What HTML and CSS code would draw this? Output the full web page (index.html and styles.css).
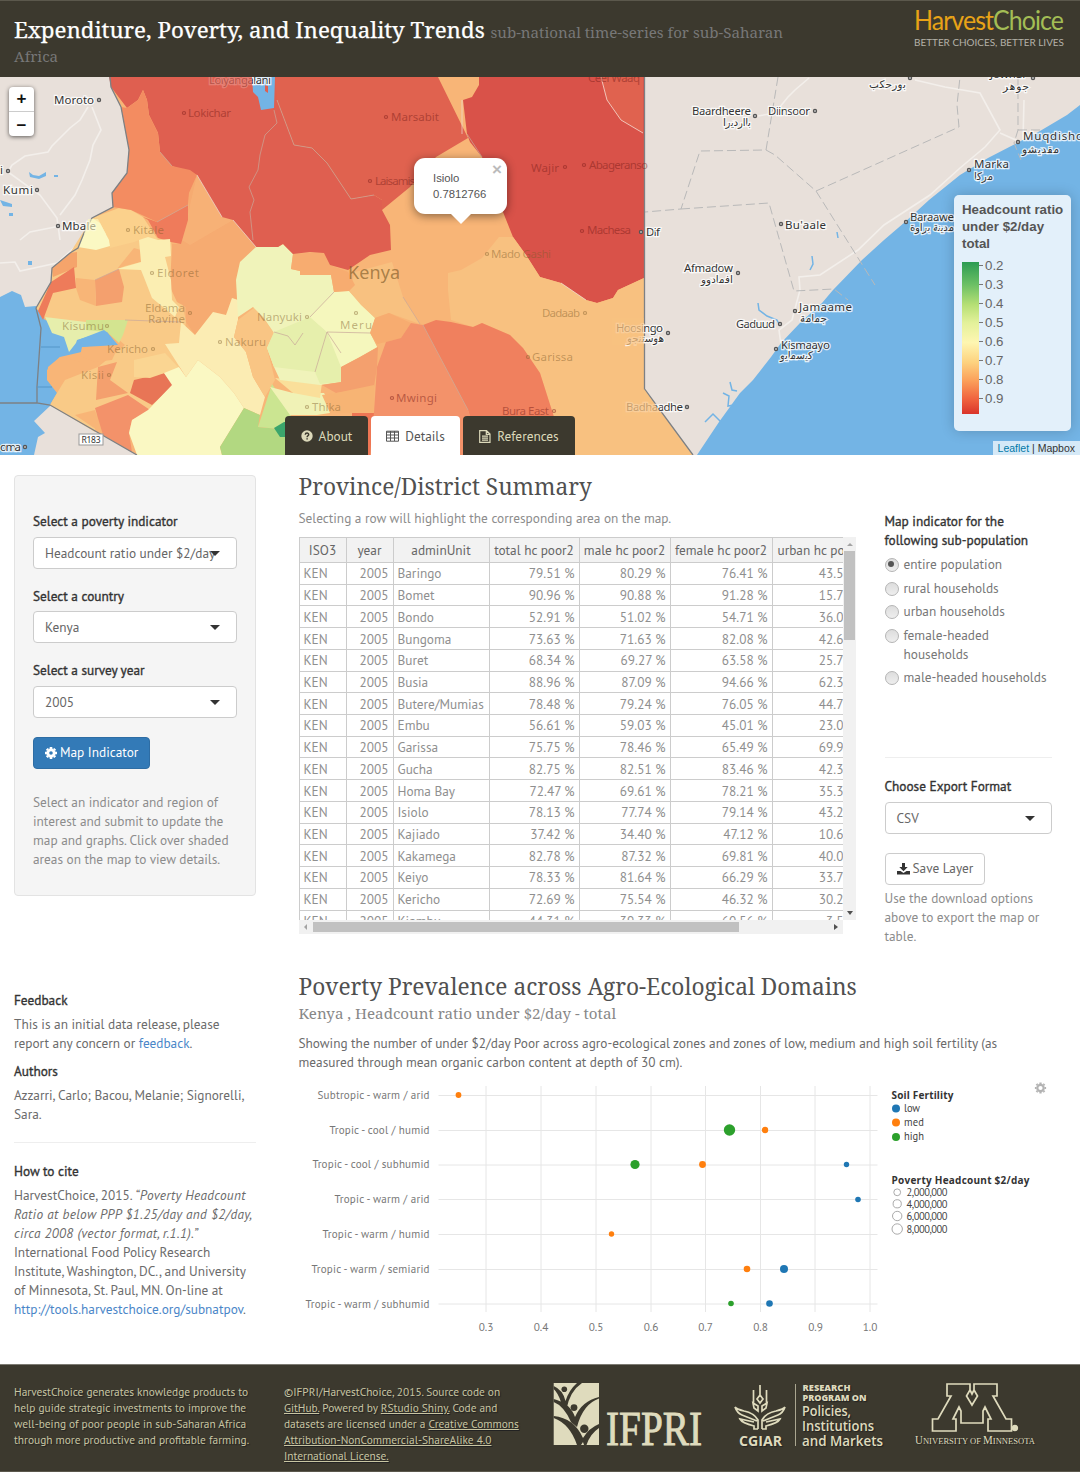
FILE: index.html
```html
<!DOCTYPE html>
<html lang="en">
<head>
<meta charset="utf-8">
<title>Expenditure, Poverty, and Inequality Trends</title>
<link rel="stylesheet" href="styles.css">
</head>
<body>
<header class="top">
  <h1 class="title">Expenditure, Poverty, and Inequality Trends <small>sub-national time-series for sub-Saharan<br>Africa</small></h1>
  <svg class="brand" width="152" height="42" viewBox="0 0 152 42">
    <text x="0" y="23" class="brand-name" textLength="149" lengthAdjust="spacingAndGlyphs"><tspan fill="#e8a317">Harvest</tspan><tspan fill="#a3bd55">Choice</tspan></text>
    <text x="0" y="39" class="brand-tag" textLength="150" lengthAdjust="spacingAndGlyphs">BETTER CHOICES, BETTER LIVES</text>
  </svg>
</header>

<section class="map">
  <svg class="map-canvas" width="1080" height="378" viewBox="0 77 1080 378">
    <rect x="0" y="77" width="1080" height="378" fill="#e8e0da"/>
    <g fill="none" stroke="#f3efeb" stroke-width="1.6">
      <path d="M88 107L80 120 70 128 52 146 48 152 25 156 12 165 8 172 40 195 57 218 60 240 M92 107L101 130 93 145 90 160 82 180 75 195 60 215 M60 226L30 232 20 240 M0 263L15 262 20 271 57 263 75 247"/>
      <path d="M809 78L795 90 788 97 775 113 758 116 M915 80L945 87 980 93 1000 130 985 147 960 168 930 195 884 225 858 250 820 275 799 277 800 290 792 320 779 330 781 345 M1000 133L1018 141 M1024 100L1023 140"/>
    </g>
    <path class="sea" d="M1080 105L1067 115 1040 131 1019 142 988 158 960 175 929 200 905 222 884 240 862 260 833 290 822 303 800 323 781 343 771 357 753 380 740 393 719 422 697 455H1080Z"/>
    <path class="sea" d="M0 297L12 291 21 295 25 307 36 306 48 320 60 335 100 330 120 322 120 347 88 360 60 362 50 380 60 393 50 406 34 421 45 433 38 437 34 455H0Z"/>
    <path class="sea" d="M29 172l4 3 6 1 7-4v4l-7 3-9-2zM0 200l12 4v3l-9-1zM54 175h4v2h-4zM28 261h4v4h-4zM9 213h4v3h-4z"/>
    <path d="M758 303l1 7 8 6 10 4 3 6M730 382l2 8 5 1M723 393l6 3-1 10 6-1M705 422l8-8 8 8M810 270l3-6-1-8M837 232l1 6" fill="none" stroke="#73b4e5" stroke-width="1.5"/>
    <path d="M778 77L766 150 700 151 681 209 645 212 M681 209L769 203 794 291 834 289 848 300 M766 150L775 155 816 191 875 285 M816 191L959 127 957 105 960 77 M1018 77V130L1014 143 1021 160 M1018 130H1040" fill="none" stroke="#b9b9b9" stroke-dasharray="9 4"/>

    <path fill="#f8b577" d="M110 77L111 87 121 107 129 150 127 173 112 193 113 207 92 218 84 233 78 248 70 253 52 268 51 282 36 308 45 320 107 332 118 345 90 350 60 357 47 370 47 380 57 393 50 405 137 455H693L644 389V77Z"/>
    <path fill="#f9ca87" d="M92 218L171 242 186 322 184 337 179 368 172 385 148 410 132 420 97 410 95 432 50 405 57 393 65 380 98 367 125 345 107 330 45 317 36 308 51 282 52 268 70 253Z"/>
    <path fill="#f8b577" d="M76 278L95 280V292L96 306 80 300 76 288ZM117 269L134 248 141 250 141 262 125 266ZM82 347L119 345 112 360 95 362 80 356ZM60 357L80 362 70 372 57 385 47 380 48 367ZM75 415L95 410 103 434Z"/>
    <path fill="#f5a46b" d="M77 252V267L53 277 52 268 70 253Z"/>
    <path fill="#f4a06e" d="M95 280L119 269 124 287 122 302 96 306ZM98 367L117 362 110 380 128 393 96 400Z"/>
    <path fill="#ee7b5a" d="M51 282L74 267 76 288 53 293 43 320 38 311Z"/>
    <path fill="#f3926a" d="M95 408L128 395 150 410 132 420 129 433 132 452 103 435Z"/>
    <path fill="#e87556" d="M134 380L164 373 174 385 152 405 130 393Z"/>
    <path fill="#fad592" d="M134 360L165 353 179 368 150 378 134 377Z"/>
    <path fill="#f6ab71" d="M197 175L222 217 233 220 256 247 240 262 236 280 238 300 232 298 226 315 213 312 195 335 186 322 186 307 177 302 170 287 172 244 181 244 188 220 189 193Z"/>
    <path fill="#f8b378" d="M197 175L222 217 233 220 190 245 182 240Z" opacity=".8"/>
    <path fill="#fbd18c" d="M92 218L119 208 131 210 143 217 158 240 139 240 134 242 110 248 109 240 100 223Z"/>
    <path fill="#ef7b5b" d="M143 217L157 222 188 205V220L181 244 171 242 158 238 148 220Z"/>
    <path fill="#fbf8c3" d="M92 218L100 223 109 240 110 246 96 250 78 247 84 233Z"/>
    <path fill="#fbeeb2" d="M139 240L148 237 158 240 170 239 171 256 165 257 171 280 172 300 179 307 175 317 152 298 145 280 141 270 117 269 141 262Z"/>
    <path fill="#e6eeac" d="M45 317L86 322 103 332 77 340 76 343 69 352 64 337 52 333Z"/>
    <path fill="#d3e490" d="M86 320L128 320 123 335 119 343 107 332 86 330Z"/>
    <path class="sea" d="M78 340L104 330 108 333 112 343 82 347Z"/>
    <path fill="#fbecb3" d="M165 344L179 343 181 322 195 335 213 312 226 315 232 298 238 300V320L234 337 246 352 253 377 265 397 260 415 244 408 234 393 220 377 198 360 186 377Z"/>
    <path fill="#f9c584" d="M238 320L255 307 274 333 267 348 275 380 272 385 265 397 253 377 246 352 234 337Z"/>
    <path fill="#faf8c3" d="M164 373L179 367 186 377 198 360 220 377 234 393 244 408 220 447 222 455H137L129 433 132 420 148 410 172 385Z"/>
    <path fill="#b2d881" d="M244 408L260 415 258 427 290 430V455H222L220 447Z"/>
    <path fill="#cbe591" d="M272 384L291 412 290 430 258 427Z"/>
    <path fill="#3ba56c" d="M274 428L284 422H292V437H280Z"/>
    <path fill="#f0f2b6" d="M270 387L293 393 324 393 336 412 317 415H290Z"/>
    <path fill="#fadf9a" d="M275 378L322 383 320 398 293 393Z"/>
    <path fill="#f0f3ba" d="M256 247H278L283 244 293 254 291 269 300 271V275H331L334 292 349 291 361 305 375 318 370 333 377 347 360 357 341 367V382L320 385 280 380 274 367 267 348 274 333 263 317 253 307 238 317 236 280 240 262Z"/>
    <path fill="#e6efac" d="M274 332L310 317 327 332 341 353V382L320 384 315 372 274 367 267 348Z"/>
    <path fill="#f5f7bd" d="M310 317L334 292 349 291 375 318 370 333 377 347 341 367 327 332Z"/>
    <path fill="#f8c180" d="M355 272L392 262 403 297 420 324 389 313 375 318 361 305 349 291Z"/>
    <path fill="#f7ac70" d="M293 254L324 252 330 265 348 272 355 285 349 291 334 292 331 275H300V271L291 269ZM375 318L389 313 411 323 401 338 386 342 377 344 370 333Z"/>
    <path fill="#f4a06e" d="M360 357L378 347 377 367 374 387 336 393 322 385 341 382V367Z"/>
    <path fill="#f7b474" d="M336 393L374 385V412L330 413 322 395Z"/>
    <path fill="#ee7654" d="M352 413h28v42h-28z"/>
    <path fill="#df5f50" d="M109 77H277V100L294 145 312 148 327 163 351 199 374 195 382 200V210L390 225 391 250 370 255 348 270 330 265 324 253 310 252 293 254 283 244 278 247H256L233 220 222 217 197 175 172 166 160 152 158 133 149 115 147 100 143 90 138 100 127 108 111 87Z"/>
    <path fill="#e0624f" d="M275 77H438L468 138 436 157 410 187 382 210V200L374 195 351 199 327 163 312 148 294 145 277 100Z"/>
    <path fill="#f38c61" d="M121 107L127 108 138 100 143 90 147 100 149 115 158 133 160 152 172 166 190 170 197 175 189 193 188 205 157 222 131 210 119 208 113 207 112 193 127 173 129 150Z"/>
    <path fill="#d95249" d="M479 77H644V278L618 290 613 298 597 303 586 300 561 283 540 277 526 255 513 237 501 207 482 157 470 142 467 134 463 100 472 97 479 85Z"/>
    <path fill="#e0624f" d="M601 77L607 100 621 120 643 133V77Z"/>
    <path d="M601 77L607 100 621 120 643 133" fill="none" stroke="#f1c4b8"/>
    <path fill="#f8c180" d="M448 273L461 270 482 258 499 237 513 237 526 255 540 277 561 283 586 300 597 303 613 298 618 290 644 278V389L693 455H560L554 417 540 373 523 348 510 335 482 323 473 327 451 320 448 290Z"/>
    <path fill="#f0805e" d="M423 325L436 320 451 322 473 327 482 323 510 335 523 348 540 373 554 417 560 455H480L468 410Z"/>
    <path fill="#f3926a" d="M423 325L411 323 401 338 386 342 377 367 374 412 370 455H485L468 410Z"/>
    <path class="sea" d="M252 77H275L274 108 261 110 258 97 253 92Z"/>
    <path d="M265 85l3 1v7l-3-2z" fill="#df5f50"/>
    <g fill="none" stroke="#c9a79a" stroke-width=".7">
      <path d="M274 110L277 123 265 135 260 155 258 170 249 187 254 200 250 212 253 240M277 100L294 145 312 148 327 163 351 199 374 195M467 134L482 157M172 166L160 152M423 325L468 410M403 297L420 324M310 317L334 292M327 332L341 353M327 332L315 372M327 332L370 333M188 205L157 222M125 320L181 322M95 280L119 269M274 332L288 336 295 345 303 333"/>
      <path stroke="#eddcd5" d="M561 283L586 300M462 100V134M197 175L222 217M233 220L256 247"/>
    </g>
    <path d="M110 77L111 87 121 107 129 150 127 173 112 193 113 207 92 218 84 233 78 248 70 253 52 268 51 282 36 308 41 328 37 387V403L50 405 137 455M37 403H0M644.500 77V389L693 455" fill="none" stroke="#7d8084" stroke-width="1.3"/>
    <path d="M41 347H60M37 387H52" fill="none" stroke="#5596c8"/>
    <rect x="79" y="434" width="24" height="11" fill="#fff" stroke="#999"/>
    <text class="road" x="81.500" y="443" textLength="19">R183</text>

    <g class="place">
      <text x="54" y="104" textLength="40">Moroto</text><text x="3" y="194" textLength="30">Kumi</text><text x="0" y="174">i</text><text x="62" y="230" textLength="34">Mbale</text><text x="0" y="451" textLength="21">oma</text>
      <text x="692" y="115" textLength="59">Baardheere</text><text x="768" y="115" textLength="42">Diinsoor</text><text x="785" y="229" textLength="41">Bu'aale</text><text x="684" y="272" textLength="49">Afmadow</text><text x="799" y="311" textLength="53">Jamaame</text><text x="736" y="328" textLength="39">Gaduud</text><text x="781" y="349" textLength="49">Kismaayo</text><text x="974" y="168" textLength="35">Marka</text><text x="1023" y="140" textLength="60">Muqdisho</text><text x="910" y="221" textLength="44">Baraawe</text><text x="646" y="236" textLength="14">Dif</text><text x="616" y="332" textLength="47">Hoosingo</text><text x="626" y="411" textLength="57">Badhaadhe</text>
      <g class="arabic"><text x="723" y="126" textLength="28">بااردیرا</text><text x="869" y="88" textLength="37">بورحكب</text><text x="1003" y="90" textLength="26">جوهر</text><text x="1022" y="153" textLength="37">مقديشو</text><text x="974" y="180" textLength="19">مركا</text><text x="910" y="231" textLength="44">مدينة براوة</text><text x="701" y="283" textLength="32">افمادوو</text><text x="800" y="322" textLength="27">جمامة</text><text x="780" y="359" textLength="33">كيسمايو</text><text x="627" y="342" textLength="37">هوستنجو</text></g>
      <text x="209" y="84" textLength="62">Loiyangalani</text><text x="990" y="78" textLength="37">Jowhar</text>
    </g>
    <g class="dot"><circle cx="99" cy="100" r="1.600"/><circle cx="37" cy="190" r="1.600"/><circle cx="8" cy="171" r="1.600"/><circle cx="58" cy="226" r="1.600"/><circle cx="25" cy="447" r="1.600"/><circle cx="755" cy="116" r="1.600"/><circle cx="815" cy="111" r="1.600"/><circle cx="781" cy="224" r="1.600"/><circle cx="738" cy="273" r="1.600"/><circle cx="795" cy="311" r="1.600"/><circle cx="780" cy="324" r="1.600"/><circle cx="776" cy="349" r="1.600"/><circle cx="969" cy="170" r="1.600"/><circle cx="1018" cy="142" r="1.600"/><circle cx="906" cy="222" r="1.600"/><circle cx="668" cy="333" r="1.600"/><circle cx="687" cy="407" r="1.600"/><circle cx="910" cy="78" r="1.600"/><circle cx="1033" cy="78" r="1.600"/><circle cx="641" cy="232" r="1.600"/></g>
    <!-- district fill laid over the parts of border labels that fall inside Kenya -->
    <path fill="#f8c180" opacity=".75" d="M612 318H643.500V345H612ZM622 400H644V389L656 406 663 416H622Z"/>
    <path fill="#df5f50" opacity=".75" d="M205 77H252V90H205Z"/>
    <path fill="#fbf8c3" opacity=".6" d="M88 219H98L106 234H84Z"/>
    <g class="covered red">
      <text x="188" y="117" textLength="43">Lokichar</text><text x="391" y="121" textLength="48">Marsabit</text><text x="375" y="185" textLength="40">Laisamis</text><text x="531" y="172" textLength="28">Wajir</text><text x="589" y="169" textLength="59">Abageranso</text><text x="587" y="234" textLength="44">Machesa</text><text x="588" y="82" textLength="52">Ceel Waaq</text>
      <circle cx="184" cy="113" r="1.500"/><circle cx="386" cy="117" r="1.500"/><circle cx="370" cy="181" r="1.500"/><circle cx="565" cy="167" r="1.500"/><circle cx="584" cy="165" r="1.500"/><circle cx="582" cy="231" r="1.500"/>
      <text x="396" y="402" textLength="41">Mwingi</text><text x="502" y="415" textLength="47">Bura East</text><circle cx="392" cy="398" r="1.500"/><circle cx="554" cy="411" r="1.500"/>
    </g>
    <g class="covered tan">
      <text x="133" y="234" textLength="31">Kitale</text><text x="157" y="277" textLength="42">Eldoret</text><text x="145" y="312" textLength="40">Eldama</text><text x="148" y="323" textLength="37">Ravine</text><text x="107" y="353" textLength="41">Kericho</text><text x="81" y="379" textLength="23">Kisii</text><text x="225" y="346" textLength="41">Nakuru</text><text x="257" y="321" textLength="45">Nanyuki</text><text x="340" y="329" textLength="32">Meru</text><text x="312" y="411" textLength="29">Thika</text><text x="62" y="330" textLength="42">Kisumu</text><text x="491" y="258" textLength="60">Mado Gashi</text><text x="542" y="317" textLength="38">Dadaab</text><text x="532" y="361" textLength="41">Garissa</text>
      <text class="country" x="348" y="279" textLength="52">Kenya</text>
      <circle cx="128" cy="230" r="1.500"/><circle cx="152" cy="273" r="1.500"/><circle cx="190" cy="313" r="1.500"/><circle cx="153" cy="349" r="1.500"/><circle cx="109" cy="375" r="1.500"/><circle cx="220" cy="342" r="1.500"/><circle cx="307" cy="317" r="1.500"/><circle cx="356" cy="313" r="1.500"/><circle cx="307" cy="407" r="1.500"/><circle cx="487" cy="254" r="1.500"/><circle cx="585" cy="313" r="1.500"/><circle cx="528" cy="357" r="1.500"/><circle cx="107" cy="326" r="1.500"/>
    </g>
  </svg>
  <div class="zoomer"><span>+</span><span>−</span></div>
  <div class="popup">Isiolo<br>0.7812766<i>×</i></div>
  <aside class="legend">
    <b>Headcount ratio<br>under $2/day<br>total</b>
    <div class="scale"><div class="ramp"></div><ul><li>0.2</li><li>0.3</li><li>0.4</li><li>0.5</li><li>0.6</li><li>0.7</li><li>0.8</li><li>0.9</li></ul></div>
  </aside>
  <div class="credit"><a>Leaflet</a> | Mapbox</div>
  <nav class="tabs">
    <a class="tab"><svg width="12" height="12" viewBox="0 0 12 12"><circle cx="6" cy="6" r="5.700" fill="#dcd9ba"/><path d="M4.300 4.700C4.300 2.500 7.800 2.600 7.700 4.600 7.600 5.800 6.100 5.800 6.100 7.200M6.100 8.200V9.600" fill="none" stroke="#3c392e" stroke-width="1.500"/></svg>About</a>
    <a class="tab on"><svg width="13" height="12" viewBox="0 0 13 12"><path d="M.5 1.200H12.500V11.200H.5ZM.5 2.200H12.500M.5 5H12.500M.5 8H12.500M4.500 1V11M8.500 1V11" fill="none" stroke="#555"/></svg>Details</a>
    <a class="tab"><svg width="12" height="13" viewBox="0 0 12 13"><path d="M.7.700H7.500L11 4V12.300H.7ZM7.300.700V4.300H11M3 6.200H9M3 8.200H9M3 10.200H9" fill="none" stroke="#dcd9ba" stroke-width="1.200"/></svg>References</a>
  </nav>
</section>

<main class="page">
  <form class="well">
    <label>Select a poverty indicator</label>
    <div class="select">Headcount ratio under $2/day</div>
    <label>Select a country</label>
    <div class="select">Kenya</div>
    <label>Select a survey year</label>
    <div class="select">2005</div>
    <button type="button" class="primary"><svg width="12" height="12" viewBox="-6 -6 12 12"><circle r="3.200" fill="none" stroke="#fff" stroke-width="2.800"/><path d="M0-6V-4M0 6V4M-6 0H-4M6 0H4M-4.200-4.200L-3-3M4.200 4.200L3 3M4.200-4.200L3-3M-4.200 4.200L-3 3" stroke="#fff" stroke-width="2.600"/></svg>Map Indicator</button>
    <p>Select an indicator and region of<br>interest and submit to update the<br>map and graphs. Click over shaded<br>areas on the map to view details.</p>
  </form>

  <section class="summary">
    <h2>Province/District Summary</h2>
    <p class="hint">Selecting a row will highlight the corresponding area on the map.</p>
    <div class="grid">
      <div class="viewport">
        <table>
          <colgroup><col class="c1"><col class="c2"><col class="c3"><col class="c4"><col class="c5"><col class="c6"><col class="c7"></colgroup>
          <tr><th>ISO3</th><th>year</th><th>adminUnit</th><th>total hc poor2</th><th>male hc poor2</th><th>female hc poor2</th><th>urban hc poor2</th></tr>
          <tr><td>KEN</td><td>2005</td><td>Baringo</td><td>79.51 %</td><td>80.29 %</td><td>76.41 %</td><td>43.56 %</td></tr>
          <tr><td>KEN</td><td>2005</td><td>Bomet</td><td>90.96 %</td><td>90.88 %</td><td>91.28 %</td><td>15.74 %</td></tr>
          <tr><td>KEN</td><td>2005</td><td>Bondo</td><td>52.91 %</td><td>51.02 %</td><td>54.71 %</td><td>36.00 %</td></tr>
          <tr><td>KEN</td><td>2005</td><td>Bungoma</td><td>73.63 %</td><td>71.63 %</td><td>82.08 %</td><td>42.60 %</td></tr>
          <tr><td>KEN</td><td>2005</td><td>Buret</td><td>68.34 %</td><td>69.27 %</td><td>63.58 %</td><td>25.70 %</td></tr>
          <tr><td>KEN</td><td>2005</td><td>Busia</td><td>88.96 %</td><td>87.09 %</td><td>94.66 %</td><td>62.30 %</td></tr>
          <tr><td>KEN</td><td>2005</td><td>Butere/Mumias</td><td>78.48 %</td><td>79.24 %</td><td>76.05 %</td><td>44.70 %</td></tr>
          <tr><td>KEN</td><td>2005</td><td>Embu</td><td>56.61 %</td><td>59.03 %</td><td>45.01 %</td><td>23.00 %</td></tr>
          <tr><td>KEN</td><td>2005</td><td>Garissa</td><td>75.75 %</td><td>78.46 %</td><td>65.49 %</td><td>69.90 %</td></tr>
          <tr><td>KEN</td><td>2005</td><td>Gucha</td><td>82.75 %</td><td>82.51 %</td><td>83.46 %</td><td>42.30 %</td></tr>
          <tr><td>KEN</td><td>2005</td><td>Homa Bay</td><td>72.47 %</td><td>69.61 %</td><td>78.21 %</td><td>35.30 %</td></tr>
          <tr><td>KEN</td><td>2005</td><td>Isiolo</td><td>78.13 %</td><td>77.74 %</td><td>79.14 %</td><td>43.20 %</td></tr>
          <tr><td>KEN</td><td>2005</td><td>Kajiado</td><td>37.42 %</td><td>34.40 %</td><td>47.12 %</td><td>10.60 %</td></tr>
          <tr><td>KEN</td><td>2005</td><td>Kakamega</td><td>82.78 %</td><td>87.32 %</td><td>69.81 %</td><td>40.00 %</td></tr>
          <tr><td>KEN</td><td>2005</td><td>Keiyo</td><td>78.33 %</td><td>81.64 %</td><td>66.29 %</td><td>33.74 %</td></tr>
          <tr><td>KEN</td><td>2005</td><td>Kericho</td><td>72.69 %</td><td>75.54 %</td><td>46.32 %</td><td>30.20 %</td></tr>
          <tr><td>KEN</td><td>2005</td><td>Kiambu</td><td>44.31 %</td><td>39.33 %</td><td>60.56 %</td><td>3.50 %</td></tr>
        </table>
      </div>
      <div class="vbar"><i></i></div>
      <div class="hbar"><i></i></div>
    </div>
  </section>

  <section class="options">
    <label>Map indicator for the<br>following sub-population</label>
    <ul class="radios"><li class="on">entire population</li><li>rural households</li><li>urban households</li><li>female-headed<br>households</li><li>male-headed households</li></ul>
    <hr>
    <label>Choose Export Format</label>
    <div class="select">CSV</div>
    <button type="button" class="plain"><svg width="13" height="12" viewBox="0 0 13 12"><path d="M5 0H8V4H10.700L6.500 8.200 2.300 4H5ZM0 8H3.500L6.500 10 9.500 8H13V11.500H0Z" fill="#333"/></svg>Save Layer</button>
    <p>Use the download options<br>above to export the map or<br>table.</p>
  </section>

  <section class="notes">
    <h4>Feedback</h4>
    <p>This is an initial data release, please<br>report any concern or <a>feedback</a>.</p>
    <h4>Authors</h4>
    <p>Azzarri, Carlo; Bacou, Melanie; Signorelli,<br>Sara.</p>
    <hr>
    <h4>How to cite</h4>
    <p>HarvestChoice, 2015. <em>“Poverty Headcount<br>Ratio at below PPP $1.25/day and $2/day,<br>circa 2008 (vector format, r.1.1).”</em><br>International Food Policy Research<br>Institute, Washington, DC., and University<br>of Minnesota, St. Paul, MN. On-line at<br><a>http://tools.harvestchoice.org/subnatpov</a>.</p>
  </section>

  <section class="prevalence">
    <h2>Poverty Prevalence across Agro-Ecological Domains</h2>
    <h3>Kenya , Headcount ratio under $2/day - total</h3>
    <p>Showing the number of under $2/day Poor across agro-ecological zones and zones of low, medium and high soil fertility (as<br>measured through mean organic carbon content at depth of 30 cm).</p>
    <svg class="chart" width="766" height="264" viewBox="298.500 1078 766 264">
      <path d="M438 1095.500H877M438 1130.500H877M438 1165H877M438 1199.500H877M438 1234.500H877M438 1269.500H877M438 1304H877M485.500 1086V1312M540.500 1086V1312M595.500 1086V1312M650.500 1086V1312M705 1086V1312M760 1086V1312M814.500 1086V1312M869.500 1086V1312" fill="none" stroke="#e6e6e6"/>
      <g class="ylab"><text x="429" y="1099" textLength="112">Subtropic - warm / arid</text><text x="429" y="1134" textLength="100">Tropic - cool / humid</text><text x="429" y="1168" textLength="117">Tropic - cool / subhumid</text><text x="429" y="1203" textLength="95">Tropic - warm / arid</text><text x="429" y="1238" textLength="107">Tropic - warm / humid</text><text x="429" y="1273" textLength="118">Tropic - warm / semiarid</text><text x="429" y="1308" textLength="124">Tropic - warm / subhumid</text></g>
      <g class="xlab"><text x="485.500" y="1331">0.3</text><text x="540.500" y="1331">0.4</text><text x="595.500" y="1331">0.5</text><text x="650.500" y="1331">0.6</text><text x="705" y="1331">0.7</text><text x="760" y="1331">0.8</text><text x="815" y="1331">0.9</text><text x="869.500" y="1331">1.0</text></g>
      <g fill="#ff7f0e"><circle cx="458" cy="1095" r="2.900"/><circle cx="764.500" cy="1130" r="3.200"/><circle cx="702" cy="1164.500" r="3.400"/><circle cx="611" cy="1234" r="2.700"/><circle cx="746.500" cy="1269" r="3.300"/><circle cx="895.500" cy="1122.500" r="4"/></g>
      <g fill="#2ca02c"><circle cx="729" cy="1130" r="5.700"/><circle cx="634.500" cy="1164.500" r="4.600"/><circle cx="730.500" cy="1303.500" r="2.800"/><circle cx="895.500" cy="1137" r="4"/></g>
      <g fill="#1f77b4"><circle cx="846" cy="1164.500" r="2.700"/><circle cx="857.500" cy="1199.500" r="2.800"/><circle cx="783.500" cy="1269" r="4"/><circle cx="769" cy="1303.500" r="3.300"/><circle cx="895.500" cy="1108.500" r="4"/></g>
      <g class="key"><text x="891" y="1098.500" class="strong" textLength="62">Soil Fertility</text><text x="903.500" y="1112" textLength="16">low</text><text x="903.500" y="1126" textLength="20">med</text><text x="903.500" y="1140" textLength="20">high</text>
      <text x="891" y="1184" class="strong" textLength="138">Poverty Headcount $2/day</text><text x="906" y="1196" textLength="41">2,000,000</text><text x="906" y="1207.500" textLength="41">4,000,000</text><text x="906" y="1220" textLength="41">6,000,000</text><text x="906" y="1233" textLength="41">8,000,000</text></g>
      <g fill="#fff" stroke="#aaa"><circle cx="896.700" cy="1192.300" r="3.400"/><circle cx="896.700" cy="1203.800" r="4.100"/><circle cx="896.700" cy="1216" r="4.700"/><circle cx="896.700" cy="1229" r="5.200"/></g>
      <g transform="translate(1040 1088)" stroke="#b3b3b3" fill="none"><circle r="3.200" stroke-width="2.200"/><path d="M0-5.600V-4M0 5.600V4M-5.600 0H-4M5.600 0H4M-4-4L-3-3M4 4L3 3M4-4L3-3M-4 4L-3 3" stroke-width="2.200"/></g>
    </svg>
  </section>
</main>

<footer class="foot">
  <p>HarvestChoice generates knowledge products to<br>help guide strategic investments to improve the<br>well-being of poor people in sub-Saharan Africa<br>through more productive and profitable farming.</p>
  <p>©IFPRI/HarvestChoice, 2015. Source code on<br><u>GitHub.</u> Powered by <u>RStudio Shiny.</u> Code and<br>datasets are licensed under a <u>Creative Commons</u><br><u>Attribution-NonCommercial-ShareAlike 4.0</u><br><u>International License.</u></p>
  <svg class="logos" width="500" height="80" viewBox="545 1375 500 80">
    <rect x="553.700" y="1383" width="45.300" height="62" fill="#dfdbbd"/>
    <g fill="#3c392e"><path d="M553.700 1386Q563 1390 565.500 1401 569 1390 577 1383H582Q570 1391 566.500 1409L561 1402Q558 1393 553.700 1389ZM553.700 1399Q570 1403 575 1417 582 1401 599 1397V1398.500Q583 1404 577 1427L571 1422Q564 1406 553.700 1402ZM553.700 1416Q574 1418 583 1438 589 1428 599 1424V1428Q590 1434 586.500 1445H584L583 1442 581 1445H577Q570 1424 553.700 1418Z"/>
    <circle cx="564.300" cy="1389.300" r="2.800"/><circle cx="574" cy="1407.600" r="3.400"/><circle cx="584.300" cy="1428.700" r="4.200"/></g>
    <text x="606" y="1444.500" class="ifpri" textLength="96" lengthAdjust="spacingAndGlyphs">IFPRI</text>
    <g fill="none" stroke="#dfdbbd" stroke-width="1.700"><path d="M760 1385V1396M753.500 1390V1403M766.500 1390V1403M760 1395L757 1399 760 1403 763 1399ZM753 1403L758 1406V1411L754 1408ZM767 1403L762 1406V1411L766 1408ZM758 1429V1420Q754 1413 744 1411 736 1409 735 1407 737 1413 742 1415L757 1421M762 1429V1420Q766 1413 776 1411 784 1409 785 1407 783 1413 778 1415L763 1421M758 1429H754V1426Q742 1423 740 1419L754 1422M762 1429H766V1426Q778 1423 780 1419L766 1422"/></g>
    <text x="739" y="1446" class="cgiar" textLength="43" lengthAdjust="spacingAndGlyphs">CGIAR</text>
    <path d="M795.500 1384V1446" stroke="#aaa690"/>
    <g class="pim"><text x="802.500" y="1390.500" class="small" textLength="48" lengthAdjust="spacingAndGlyphs">RESEARCH</text><text x="802.500" y="1400.500" class="small" textLength="64" lengthAdjust="spacingAndGlyphs">PROGRAM ON</text><text x="802" y="1416" textLength="49" lengthAdjust="spacingAndGlyphs">Policies,</text><text x="802" y="1431" textLength="72" lengthAdjust="spacingAndGlyphs">Institutions</text><text x="802" y="1446" textLength="81" lengthAdjust="spacingAndGlyphs">and Markets</text></g>
    <path d="M947 1384H970V1390L972 1394 974 1390V1384H997V1396H993L1006 1419H1011.500V1431H988V1419H991L985 1407 983 1411V1423H961V1411L959 1407 953 1419H956V1431H932.500V1419H938L951 1396H947ZM970 1390L966.500 1396 972 1405 977.500 1396 974 1390" fill="none" stroke="#dfdbbd" stroke-width="1.700"/><circle cx="1015" cy="1428" r="3.200" fill="#dfdbbd"/>
    <text x="915" y="1444" class="umn" textLength="120" lengthAdjust="spacingAndGlyphs">U<tspan class="caps">NIVERSITY OF </tspan>M<tspan class="caps">INNESOTA</tspan></text>
  </svg>
</footer>
</body>
</html>
```
FILE: styles.css
```css
* { box-sizing: border-box; }
body { margin: 0; background: #fff; color: #6b6b6b; font: 13.3px/19px "PT Sans", "Open Sans", sans-serif; }
h1, h2, h3, h4, p, ul { margin: 0; padding: 0; font-weight: normal; }
ul { list-style: none; }
a { color: #4a86c8; }
hr { border: 0; border-top: 1px solid #eee; }
label, h4 { display: block; color: #333; font-size: 13.3px; line-height: 19px; -webkit-text-stroke: .35px #333; }

.top { height: 77px; padding: 18px 14px 0; background: #3c392e; border-top: 1px solid #5b584c; display: flex; justify-content: space-between; }
.title { color: #fff; font: 400 22.300px/22px "Noto Serif", "DejaVu Serif", serif; white-space: nowrap; -webkit-text-stroke: .25px #fff; }
.title small { color: #777; font-size: 15.100px; -webkit-text-stroke: 0; }
.brand { margin-top: -12px; overflow: visible; }
.brand-name { font: 27px Lato, sans-serif; letter-spacing: -1px; }
.brand-tag { font: 10px Lato, sans-serif; fill: #b5b2a9; }

.map { position: relative; height: 378px; overflow: hidden; }
.map-canvas { display: block; }
.sea { fill: #73b4e5; }
.place { font: 11.500px "Noto Sans", sans-serif; fill: #333; stroke: #fff; stroke-width: 2.5px; stroke-opacity: .8; paint-order: stroke; }
.arabic { font: 10.500px "DejaVu Sans", sans-serif; }
.road { font: 8.500px "Noto Sans", sans-serif; fill: #333; }
.dot { fill: #bbb; stroke: #555; stroke-width: 1.2px; }
.covered { font: 11.500px "Noto Sans", sans-serif; }
.covered circle { fill: none; stroke-width: 1.2px; }
.red { fill: rgba(125, 30, 25, .5); stroke: none; }
.red circle { stroke: rgba(125, 30, 25, .5); }
.tan { fill: rgba(125, 90, 40, .45); }
.tan circle { stroke: rgba(125, 90, 40, .45); }
.country { font-size: 18px; fill: rgba(125, 90, 40, .65); }

.zoomer { position: absolute; left: 9px; top: 10px; width: 25px; height: 49px; background: #fff; border-radius: 4px; box-shadow: 0 1px 4px rgba(0, 0, 0, .6); display: flex; flex-direction: column; color: #111; font: bold 17px/24px "Liberation Sans", sans-serif; text-align: center; }
.zoomer span { height: 24px; }
.zoomer span + span { border-top: 1px solid #ccc; height: 25px; line-height: 27px; }
.popup { position: absolute; left: 414px; top: 81px; width: 93px; height: 56px; padding: 13px 19px; background: #fff; border-radius: 11px; box-shadow: 0 2px 10px rgba(0, 0, 0, .45); color: #555; font: 11.300px/15.500px "Liberation Sans", sans-serif; }
.popup::after { content: ""; position: absolute; left: 37px; top: 56px; border: 10px solid transparent; border-top-color: #fff; border-bottom: 0; }
.popup i { position: absolute; right: 5px; top: 4px; color: #bbb; font: bold 17px/15px "Liberation Sans", sans-serif; }
.legend { position: absolute; left: 954px; top: 118px; width: 117px; height: 236px; padding: 6px 8px; background: rgba(255, 255, 255, .8); border-radius: 5px; box-shadow: 0 0 14px rgba(0, 0, 0, .2); color: #555; font: 13.300px/17px "Liberation Sans", sans-serif; }
.legend b { white-space: nowrap; }
.scale { display: flex; margin-top: 10px; }
.ramp { width: 17px; height: 152px; background: linear-gradient(#2c9b53, #6cc065 15%, #b5df74 28%, #e3f19a 40%, #fef6b1 53%, #fdd27f 66%, #fba05b 78%, #f0643f 90%, #d9342a); }
.scale li { height: 19px; line-height: 8px; color: #666; }
.scale li::before { content: ""; display: inline-block; width: 4px; border-top: 1px solid #777; margin-right: 2px; vertical-align: 4px; }
.credit { position: absolute; right: 0; bottom: 0; padding: 0 5px; background: rgba(255, 255, 255, .7); color: #333; font: 10.500px/14px "Liberation Sans", sans-serif; }
.credit a { color: #0078a8; }
.tabs { position: absolute; left: 285px; bottom: 0; display: flex; gap: 3px; }
.tab { width: 83px; height: 39px; padding-top: 1px; display: flex; align-items: center; justify-content: center; gap: 6px; background: #3c392e; color: #dcd9ba; border-radius: 4px 4px 0 0; }
.tab.on { width: 89px; background: #fff; color: #555; }
.tab:last-child { width: 112px; }

.page { display: grid; grid-template-columns: 242px 557px 167px; grid-template-rows: 500px 409px; column-gap: 42.500px; padding-left: 14px; }
.well { margin-top: 20px; height: 421px; padding: 36px 18px; background: #f5f5f5; border: 1px solid #e3e3e3; border-radius: 4px; }
.select { position: relative; height: 32px; margin: 5.500px 0 18.200px; padding: 0 11px; background: #fff; border: 1px solid #ccc; border-radius: 4px; line-height: 30px; white-space: nowrap; color: #666; }
.select::after { content: ""; position: absolute; right: 16px; top: 13px; border: 5px solid transparent; border-top-color: #333; border-bottom: 0; }
button { height: 32px; padding: 0 11px; border-radius: 4px; display: flex; align-items: center; gap: 3px; font: inherit; white-space: nowrap; }
.primary { margin-top: 19px; background: #337ab7; border: 1px solid #2e6da4; color: #fff; }
.well p, .hint, .options p { color: #8c8c8c; }
.well p { margin-top: 24px; white-space: nowrap; }

h2 { color: #505050; font: 22.700px/28px "Noto Serif", "DejaVu Serif", serif; white-space: nowrap; }
.summary { padding-top: 18px; }
.hint { margin-top: 8px; }
.grid { margin-top: 9px; display: grid; grid-template-columns: 544px 13px; grid-template-rows: 383px 14px; }
.viewport { overflow: hidden; }
table { width: 570px; table-layout: fixed; border-collapse: collapse; }
.c1 { width: 47px; } .c2 { width: 47px; } .c3 { width: 96px; } .c4 { width: 90px; } .c5 { width: 91px; } .c6 { width: 102px; } .c7 { width: 97px; }
th, td { border: 1px solid #ccc; padding: 0 4px; font-weight: normal; white-space: nowrap; }
th { height: 25px; background: #f2f2f2; color: #666; line-height: 22px; padding-bottom: 1px; }
td { height: 21.730px; text-align: right; color: #8f8f8f; line-height: 20px; }
td:nth-child(1), td:nth-child(3) { text-align: left; }
.vbar, .hbar { background: #f1f1f1; position: relative; }
.vbar i { display: block; margin: 14px 1px; height: 89px; background: #c1c1c1; }
.hbar i { display: block; margin: 2px 14px; width: 426px; height: 10px; background: #c1c1c1; }
.vbar::before, .vbar::after, .hbar::before, .hbar::after { content: ""; position: absolute; border: 3px solid transparent; }
.vbar::before { left: 4px; top: 3px; border-bottom-color: #a3a3a3; }
.vbar::after { left: 4px; bottom: 2px; border-top: 4px solid #505050; }
.hbar::before { left: 2px; top: 4px; border-right-color: #a3a3a3; }
.hbar::after { right: 2px; top: 4px; border-left: 4px solid #505050; }

.options { margin-left: -13.500px; width: 167px; padding-top: 57px; white-space: nowrap; }
.radios { margin-top: 5px; color: #777; }
.radios li { position: relative; padding-left: 19px; margin-bottom: 4.600px; }
.radios li::before { content: ""; position: absolute; left: 0; top: 3px; width: 12px; height: 12px; border: 1px solid #b5b5b5; border-radius: 50%; background: linear-gradient(#ddd, #eee); }
.radios .on::after { content: ""; position: absolute; left: 3px; top: 6px; width: 6px; height: 6px; border-radius: 50%; background: #555; }
.options hr { margin: 70px 0 19px; }
.plain { margin-top: 19px; background: #fff; border: 1px solid #ccc; color: #666; }
.options p { margin-top: 4px; }

.notes { padding-top: 36px; white-space: nowrap; }
.notes p { margin: 5px 0 9px; }
.notes hr { margin: 18px 0 19px; }
.notes em { letter-spacing: .33px; }
.prevalence { grid-column: 2 / 4; padding-top: 18px; }
h3 { color: #888; font: 15.140px/24px "Noto Serif", "DejaVu Serif", serif; white-space: nowrap; }
.prevalence p { margin-top: 9px; white-space: nowrap; }
.chart { display: block; margin-top: 6px; }
.ylab { font: 11px "PT Sans", "Open Sans", sans-serif; fill: #777; text-anchor: end; }
.xlab { font: 11.300px "PT Sans", "Open Sans", sans-serif; fill: #777; text-anchor: middle; }
.key { font: 10.500px "PT Sans", "Open Sans", sans-serif; fill: #444; }
.strong { font: bold 10px "Open Sans", sans-serif; fill: #333; }

.foot { height: 108px; padding: 19px 0 0 14px; background: #3c392e; border-top: 1px solid #7d7b73; border-bottom: 1px solid #5b584c; display: flex; color: #c8c5a2; font-size: 11.370px; line-height: 16px; white-space: nowrap; text-shadow: 1px 1px 1px #222; }
.foot p { width: 270px; }
.foot p + p { width: 261px; }
.logos { margin-top: -9px; flex: none; }
.ifpri { font: 48px "Liberation Serif", serif; fill: #dfdbbd; stroke: #dfdbbd; stroke-width: .9px; text-shadow: none; }
.cgiar { font: bold 14px "Open Sans", sans-serif; fill: #dfdbbd; }
.pim { font: 600 13.500px "Open Sans", sans-serif; fill: #dfdbbd; }
.small { font: 800 8px "Open Sans", sans-serif; }
.umn { font: 11.500px "Liberation Serif", serif; fill: #dfdbbd; }
.caps { font-size: 9px; }
```
